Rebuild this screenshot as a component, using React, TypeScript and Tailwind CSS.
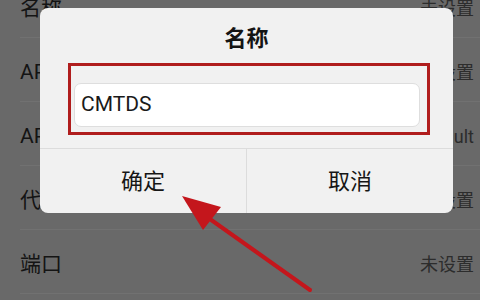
const rows = [
  { label: '名称', value: '未设置' },
  { label: 'APN', value: '未设置' },
  { label: 'APN类型', value: 'default' },
  { label: '代理', value: '未设置' },
  { label: '端口', value: '未设置' },
];

export default function App() {
  return (
    <div
      className="relative w-[480px] h-[300px] overflow-hidden bg-[#696969]"
      style={{ fontFamily: 'Roboto, "Noto Sans CJK SC", sans-serif' }}
    >
      {/* dimmed settings list behind the dialog */}
      <div className="-mt-[26px] flex flex-col">
        {rows.map((r) => (
          <div
            key={r.label}
            className="ml-[20px] h-[64px] flex items-center justify-between pt-[6px] pr-[6px] border-b border-[#717171]"
          >
            <span className="text-[21px] text-[#141414]">{r.label}</span>
            <span className="text-[18px] text-[#2c2c2c]">{r.value}</span>
          </div>
        ))}
      </div>

      {/* dialog */}
      <div className="absolute left-[40px] top-[8px] w-[413px] rounded-[8px] bg-[#f1f1f1] flex flex-col">
        <div className="pt-[20px] text-center text-[22px] leading-[22px] font-bold text-[#141414]">名称</div>
        <div className="mt-[13px] ml-[28px] mr-[23px] border-[3px] border-[#b01d1d] pt-[17px] pl-[3px] pr-[7px] pb-[5px]">
          <div className="h-[44px] rounded-[7px] bg-white border border-[#dedede] flex items-center pl-[6px] text-[21px] text-[#1a1a1a]">
            CMTDS
          </div>
        </div>
        <div className="mt-[13px] border-t border-[#dcdcdc] grid grid-cols-[207px_1fr] h-[65px]">
          <div className="flex items-center justify-center border-r border-[#dcdcdc] text-[22px] text-[#161616]">确定</div>
          <div className="flex items-center justify-center text-[22px] text-[#161616]">取消</div>
        </div>
      </div>

      {/* annotation arrow */}
      <svg className="absolute left-0 top-0" width="480" height="300" viewBox="0 0 480 300">
        <line x1="310" y1="290" x2="200" y2="212" stroke="#c4161c" strokeWidth="4" strokeLinecap="round" />
        <polygon points="182,196 221,207 203,230" fill="#c4161c" />
      </svg>
    </div>
  );
}
